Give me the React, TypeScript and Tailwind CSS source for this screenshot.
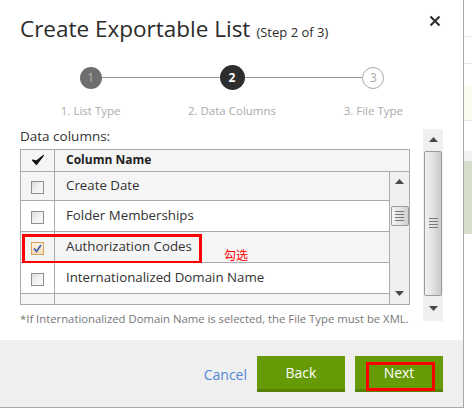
import React from "react";

const font = { fontFamily: '"Open Sans", "Noto Sans", "Noto Sans CJK SC", sans-serif' };

function Checkbox({ checked }: { checked?: boolean }) {
  if (checked) {
    return (
      <div className="w-[13px] h-[13px] border border-[#d9a25a] bg-gradient-to-b from-[#fdf3e4] to-[#f2dcb8] flex items-center justify-center">
        <svg width="9" height="9" viewBox="0 0 9 9">
          <path d="M1 4.5 L3.5 7.5 L8 1" stroke="#3b5aa6" strokeWidth="1.6" fill="none" />
        </svg>
      </div>
    );
  }
  return (
    <div className="w-[13px] h-[13px] border border-[#8f8f8f] bg-gradient-to-br from-[#dcdcdc] via-[#f2f2f2] to-[#fafafa]" />
  );
}

function Arrow({ up }: { up?: boolean }) {
  return (
    <svg width="9" height="5" viewBox="0 0 9 5">
      {up ? <path d="M0 5 L4.5 0 L9 5 Z" fill="#4a4a4a" /> : <path d="M0 0 L4.5 5 L9 0 Z" fill="#4a4a4a" />}
    </svg>
  );
}

function Grip() {
  return (
    <div className="flex flex-col gap-[2px] items-center">
      <div className="w-[9px] h-px bg-[#777]" />
      <div className="w-[9px] h-px bg-[#777]" />
      <div className="w-[9px] h-px bg-[#777]" />
      <div className="w-[9px] h-px bg-[#777]" />
    </div>
  );
}

function Step({ n, label, kind, first, last }: { n: number; label: string; kind: "done" | "active" | "todo"; first?: boolean; last?: boolean }) {
  const circle =
    kind === "done"
      ? "w-[22px] h-[22px] bg-[#6e6e6e] text-[#b5b5b5]"
      : kind === "active"
      ? "bg-[#2e2e2e] text-white font-bold w-[25px] h-[25px]"
      : "w-[22px] h-[22px] bg-white border border-[#aaa] text-[#aaa]";
  return (
    <div className="flex flex-col items-center">
      <div className="flex items-center w-full h-[25px]">
        <div className={`flex-1 h-px ${first ? "" : "bg-[#9a9a9a]"}`} />
        <div className={`rounded-full flex items-center justify-center text-[12px] leading-none ${circle}`}>{n}</div>
        <div className={`flex-1 h-px ${last ? "" : "bg-[#9a9a9a]"}`} />
      </div>
      <div className="mt-[15px] text-[11.5px] text-[#aaa] leading-none">{label}</div>
    </div>
  );
}

export default function App() {
  const rows = [
    { name: "Create Date", h: "h-[29px]", bg: "bg-[#f5f5f5]" },
    { name: "Folder Memberships", h: "h-[31px]", bg: "bg-white" },
    { name: "Authorization Codes", h: "h-[31px]", bg: "bg-[#f5f5f5]", checked: true },
    { name: "Internationalized Domain Name", h: "h-[31px]", bg: "bg-white" },
  ];
  return (
    <div className="w-[472px] h-[412px] flex bg-white overflow-hidden" style={font}>
      <div className="w-[464px] h-[408px] border-r border-b border-[#a9a9a9] flex flex-col bg-white">
        {/* header */}
        <div className="flex items-start justify-between pl-[20px] pr-[22px] pt-[14px] h-[52px]">
          <div className="flex items-baseline text-[#2b2b2b]">
            <span className="text-[22.5px] leading-[30px]">Create Exportable List</span>
            <span className="ml-[6px] text-[13px]">(Step 2 of 3)</span>
          </div>
          <svg width="12" height="12" viewBox="0 0 12 12" className="mt-[1px]">
            <path d="M1.5 1.5 L10.5 10.5 M10.5 1.5 L1.5 10.5" stroke="#333" strokeWidth="2.2" />
          </svg>
        </div>
        {/* stepper */}
        <div className="grid grid-cols-3 ml-[20px] w-[424px] mt-[13px]">
          <Step n={1} label="1. List Type" kind="done" first />
          <Step n={2} label="2. Data Columns" kind="active" />
          <Step n={3} label="3. File Type" kind="todo" last />
        </div>
        {/* body */}
        <div className="flex h-[207px] mt-[12px]">
          <div className="ml-[20px] w-[390px] flex flex-col">
            <div className="text-[13.5px] text-[#333] leading-none mt-[1px] h-[15px]">Data columns:</div>
            <div className="mt-[4px] border border-[#ababab] h-[156px] flex flex-col">
              <div className="flex h-[22px] bg-[#f5f5f5] border-b border-[#ababab]">
                <div className="w-[34px] border-r border-[#ababab] flex items-center justify-center">
                  <svg width="12" height="10" viewBox="0 0 12 10">
                    <path d="M0.5 5 L4.5 9.5 L11.5 0.5 L4.5 6 Z" fill="#111" stroke="#111" strokeWidth="1.2" strokeLinejoin="round" />
                  </svg>
                </div>
                <div className="pl-[11px] flex items-center text-[12px] font-bold text-[#222]">Column Name</div>
              </div>
              <div className="flex flex-1 min-h-0">
                <div className="flex-1 flex flex-col overflow-hidden">
                  {rows.map((r, i) => (
                    <div key={i} className={`relative flex ${r.h} ${r.bg} border-b border-[#ababab] shrink-0`}>
                      <div className="w-[34px] border-r border-[#ababab] flex items-center justify-center pt-[3px]">
                        <Checkbox checked={r.checked} />
                      </div>
                      <div className="pl-[11px] flex items-center text-[13.3px] text-[#333] whitespace-nowrap">{r.name}</div>
                      {r.checked && (
                        <>
                          <div className="absolute left-[1px] top-[2px] w-[180px] h-[30px] border-[3px] border-[#ff0000]" />
                          <div className="absolute left-[203px] top-[17px] text-[12px] leading-none text-[#ff0000]" style={{ fontFamily: '"Noto Sans CJK SC", sans-serif' }}>勾选</div>
                        </>
                      )}
                    </div>
                  ))}
                  <div className="flex flex-1 bg-[#f5f5f5]">
                    <div className="w-[34px] border-r border-[#ababab]" />
                  </div>
                </div>
                {/* inner scrollbar */}
                <div className="w-[20px] border-l border-[#ababab] bg-[#f0f0f0] flex flex-col items-center">
                  <div className="h-[20px] flex items-center justify-center"><Arrow up /></div>
                  <div className="mt-[14px] w-[18px] h-[20px] rounded-[2px] border border-[#9b9b9b] bg-gradient-to-r from-[#f4f4f4] via-[#e4e4e4] to-[#d0d0d0] flex items-center justify-center">
                    <Grip />
                  </div>
                  <div className="flex-1" />
                  <div className="h-[20px] flex items-center justify-center"><Arrow /></div>
                </div>
              </div>
            </div>
            <div className="mt-[8px] text-[11.3px] text-[#777] leading-none whitespace-nowrap">*If Internationalized Domain Name is selected, the File Type must be XML.</div>
          </div>
          {/* outer scrollbar */}
          <div className="ml-[13px] w-[20px] h-[192px] bg-[#f0f0f0] flex flex-col items-center">
            <div className="h-[22px] flex items-center justify-center"><Arrow up /></div>
            <div className="w-[18px] h-[145px] rounded-[2px] border border-[#9b9b9b] bg-gradient-to-r from-[#f2f2f2] via-[#e2e2e2] to-[#c9c9c9] flex items-center justify-center">
              <Grip />
            </div>
            <div className="flex-1 flex items-center justify-center"><Arrow /></div>
          </div>
        </div>
        {/* footer */}
        <div className="mt-auto h-[67px] bg-[#efefef] flex items-start justify-end pt-[16px] pr-[20px]">
          <div className="h-[36px] flex items-center text-[14px] text-[#4f86d9] mr-[10px]">Cancel</div>
          <div className="w-[88px] h-[36px] bg-[#679a07] border-b-[3px] border-[#578205] flex items-center justify-center text-white text-[14px]">Back</div>
          <div className="relative ml-[10px] w-[88px] h-[36px] bg-[#679a07] border-b-[3px] border-[#578205] flex items-center justify-center text-white text-[14px]">
            Next
            <div className="absolute left-[11px] right-[8px] top-[6px] bottom-[-2px] border-[3px] border-[#ff0000]" />
          </div>
        </div>
      </div>
      {/* background page strip */}
      <div className="flex-1 flex flex-col bg-white">
        <div className="h-[36px]" />
        <div className="h-px bg-[#e6e6e6]" />
        <div className="h-[26px]" />
        <div className="h-px bg-[#e6e6e6]" />
        <div className="h-[22px]" />
        <div className="h-[34px] bg-[#fbfbf0]" />
        <div className="h-px bg-[#e6e6e6]" />
        <div className="h-[30px]" />
        <div className="h-[10px] bg-[#f1f1f1]" />
        <div className="h-[73px] bg-[#d6dfcc]" />
        <div className="flex-1" />
      </div>
    </div>
  );
}
